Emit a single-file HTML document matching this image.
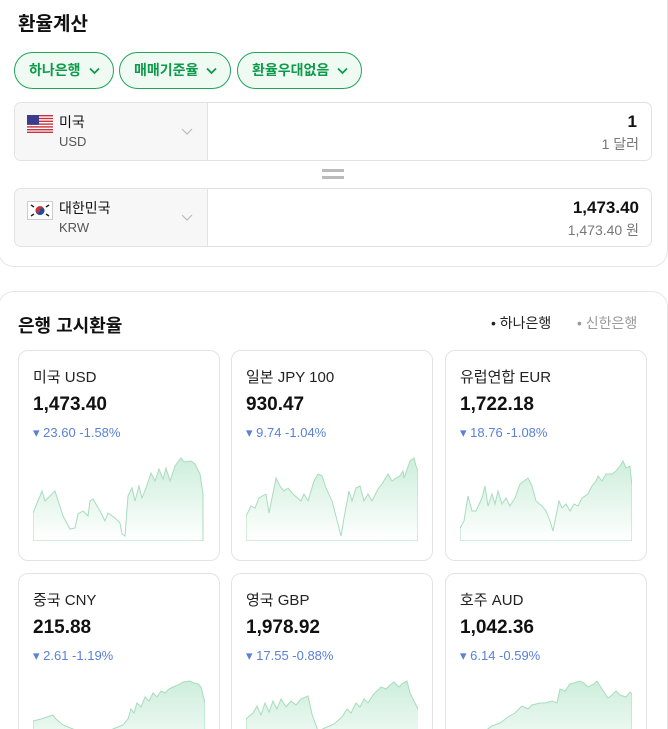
<!DOCTYPE html>
<html><head><meta charset="utf-8"><style>
*{margin:0;padding:0;box-sizing:border-box}
html,body{width:668px;height:729px;overflow:hidden}
body{background:#fff;font-family:"Liberation Sans","Noto Sans CJK KR",sans-serif;color:#111;position:relative}
.a{position:absolute;white-space:nowrap}
.panel{position:absolute;left:-2px;width:670px;border:1px solid #e6e6e6;background:#fff}
.chip{position:absolute;top:52px;height:37px;border:1px solid #1fa55a;border-radius:19px;background:#effaf3;color:#0d9a4a;font-weight:bold;font-size:14px;line-height:35px;padding-left:14px;padding-right:32px;white-space:nowrap}
.chip svg{position:absolute;right:13px;top:14px}
.box{position:absolute;left:14px;width:638px;height:59px;border:1px solid #e2e2e2;border-radius:7px;overflow:hidden}
.box .l{position:absolute;left:0;top:0;width:193px;height:100%;background:#f7f7f7;border-right:1px solid #e2e2e2}
.card{position:absolute;width:202px;height:211px;border:1px solid #e3e3e3;border-radius:10px;background:#fff;overflow:hidden}
.card.b{height:156px;border-bottom:none;border-radius:10px 10px 0 0}
.card .t{position:absolute;left:14px;top:15px;font-size:15px;color:#222}
.card .v{position:absolute;left:14px;top:43px;font-size:19px;font-weight:bold;color:#111}
.card .c{position:absolute;left:14px;top:74px;font-size:13px;color:#5a80d8}
.card svg.ch{position:absolute;left:14px;top:105px}
</style></head><body>
<div class="panel" style="top:-20px;height:287px;border-radius:0 0 16px 16px"></div>
<div class="panel" style="top:291px;height:438px;border-bottom:none;border-radius:16px 16px 0 0"></div>

<div class="a" style="left:18px;top:9px;font-size:19px;font-weight:bold">환율계산</div>
<div class="chip" style="left:14px">하나은행<svg width="11" height="8" viewBox="0 0 11 8"><path d="M1 1.5l4.5 4.5 4.5-4.5" fill="none" stroke="#0d9a4a" stroke-width="1.8"/></svg></div>
<div class="chip" style="left:119px">매매기준율<svg width="11" height="8" viewBox="0 0 11 8"><path d="M1 1.5l4.5 4.5 4.5-4.5" fill="none" stroke="#0d9a4a" stroke-width="1.8"/></svg></div>
<div class="chip" style="left:237px">환율우대없음<svg width="11" height="8" viewBox="0 0 11 8"><path d="M1 1.5l4.5 4.5 4.5-4.5" fill="none" stroke="#0d9a4a" stroke-width="1.8"/></svg></div>

<div class="box" style="top:102px"><div class="l">
<svg class="a" style="left:12px;top:12px" width="26" height="18" viewBox="0 0 26 18"><rect width="26" height="18" fill="#fff"/><g fill="#c8323c"><rect y="0" width="26" height="1.4"/><rect y="2.8" width="26" height="1.4"/><rect y="5.6" width="26" height="1.4"/><rect y="8.4" width="26" height="1.4"/><rect y="11.2" width="26" height="1.4"/><rect y="14" width="26" height="1.4"/><rect y="16.6" width="26" height="1.4"/></g><rect width="12" height="9.8" fill="#3c3b8e"/></svg>
<div class="a" style="left:44px;top:9px;font-size:14px">미국</div>
<div class="a" style="left:44px;top:31px;font-size:13px;color:#555">USD</div>
<svg class="a" style="left:166px;top:25px" width="12" height="8" viewBox="0 0 12 8"><path d="M1 1l5 5 5-5" fill="none" stroke="#bbb" stroke-width="1.2"/></svg>
</div>
<div class="a" style="right:14px;top:9px;font-size:17px;font-weight:bold">1</div>
<div class="a" style="right:12px;top:31px;font-size:14px;color:#777">1 달러</div>
</div>
<div class="a" style="left:322px;top:169px;width:22px;height:3px;background:#bbb"></div>
<div class="a" style="left:322px;top:176px;width:22px;height:3px;background:#bbb"></div>

<div class="box" style="top:188px"><div class="l">
<svg class="a" style="left:12px;top:12px" width="26" height="19" viewBox="0 0 26 19"><rect x=".5" y=".5" width="25" height="18" fill="#fff" stroke="#ccc"/><circle cx="13" cy="9.5" r="4.5" fill="#c8323c"/><path d="M8.5 9.5a4.5 4.5 0 0 0 9 0a2.25 2.25 0 0 0-4.5 0a2.25 2.25 0 0 1-4.5 0z" fill="#1a4fa0"/><g stroke="#222" stroke-width="1.4"><path d="M4 4l3 2M4 15l3-2M22 4l-3 2M22 15l-3-2"/></g></svg>
<div class="a" style="left:44px;top:9px;font-size:14px">대한민국</div>
<div class="a" style="left:44px;top:31px;font-size:13px;color:#555">KRW</div>
<svg class="a" style="left:166px;top:25px" width="12" height="8" viewBox="0 0 12 8"><path d="M1 1l5 5 5-5" fill="none" stroke="#bbb" stroke-width="1.2"/></svg>
</div>
<div class="a" style="right:12px;top:9px;font-size:17px;font-weight:bold">1,473.40</div>
<div class="a" style="right:12px;top:31px;font-size:14px;color:#777">1,473.40 원</div>
</div>

<div class="a" style="left:18px;top:312px;font-size:18px;font-weight:bold">은행 고시환율</div>
<div class="a" style="left:491px;top:313px;font-size:14px;color:#222">• 하나은행</div>
<div class="a" style="left:577px;top:313px;font-size:14px;color:#999">• 신한은행</div>

<svg width="0" height="0" style="position:absolute"><defs><linearGradient id="g" x1="0" y1="0" x2="0" y2="1"><stop offset="0" stop-color="#cdeedb"/><stop offset="1" stop-color="#fff"/></linearGradient></defs></svg>

<div class="card" style="left:18px;top:350px"><div class="t">미국 USD</div><div class="v">1,473.40</div><div class="c">▾ 23.60 -1.58%</div>
<svg class="ch" width="172" height="85" viewBox="0 0 172 85"><path d="M0 57L9 35 12 45 20 37 22 35 30 60 37 73 42 72 45 58 50 55 55 60 57 45 60 43 67 55 72 65 75 57 82 62 87 67 89 78 92 80 95 40 99 32 102 45 106 30 109 42 113 32 118 17 122 25 126 13 130 23 133 12 137 25 142 10 148 2 151 6 158 5 162 8 167 18 170 38V85H0Z" fill="url(#g)" stroke="#a8dcbd" stroke-width="1"/></svg></div>

<div class="card" style="left:231px;top:350px"><div class="t">일본 JPY 100</div><div class="v">930.47</div><div class="c">▾ 9.74 -1.04%</div>
<svg class="ch" width="172" height="85" viewBox="0 0 172 85"><path d="M0 60L5 50 9 52 13 42 20 38 23 57 30 22 34 30 38 35 42 32 47 38 55 45 58 38 62 45 68 25 72 18 76 20 80 32 86 45 92 68 95 80 98 62 103 35 106 45 110 32 114 30 118 45 122 38 126 45 132 33 136 28 142 18 146 25 150 22 154 20 157 15 158 22 164 5 168 2 170 10 172 15V85H0Z" fill="url(#g)" stroke="#a8dcbd" stroke-width="1"/></svg></div>

<div class="card" style="left:445px;top:350px"><div class="t">유럽연합 EUR</div><div class="v">1,722.18</div><div class="c">▾ 18.76 -1.08%</div>
<svg class="ch" width="172" height="85" viewBox="0 0 172 85"><path d="M0 72L4 65 8 40 12 55 16 55 22 42 25 30 28 50 32 38 35 48 38 35 42 48 46 42 50 50 55 42 60 28 64 25 68 22 72 30 76 45 82 50 86 55 90 65 93 75 96 60 99 45 102 52 106 48 110 55 114 48 118 50 122 42 128 38 132 30 136 25 138 20 142 25 146 18 152 18 156 15 160 10 163 5 166 12 170 10 172 30V85H0Z" fill="url(#g)" stroke="#a8dcbd" stroke-width="1"/></svg></div>

<div class="card b" style="left:18px;top:573px"><div class="t">중국 CNY</div><div class="v">215.88</div><div class="c">▾ 2.61 -1.19%</div>
<svg class="ch" width="172" height="85" viewBox="0 0 172 85"><path d="M0 42L8 40 14 38 20 36 23 40 30 46 45 52 60 54 75 52 90 46 95 40 98 30 101 34 104 24 108 28 112 18 116 22 120 14 124 18 128 12 132 14 136 10 140 8 145 6 150 3 157 2 161 4 165 5 168 8 172 24V85H0Z" fill="url(#g)" stroke="#a8dcbd" stroke-width="1"/></svg></div>

<div class="card b" style="left:231px;top:573px"><div class="t">영국 GBP</div><div class="v">1,978.92</div><div class="c">▾ 17.55 -0.88%</div>
<svg class="ch" width="172" height="85" viewBox="0 0 172 85"><path d="M0 40L7 34 11 27 15 36 19 24 23 33 27 22 31 30 35 20 40 28 45 22 50 26 55 20 62 17 66 35 72 52 88 45 96 38 101 30 105 34 110 24 114 28 118 20 122 24 127 16 131 12 135 8 140 10 144 6 148 3 153 8 157 4 161 2 164 14 167 20 170 26 174 34V85H0Z" fill="url(#g)" stroke="#a8dcbd" stroke-width="1"/></svg></div>

<div class="card b" style="left:445px;top:573px"><div class="t">호주 AUD</div><div class="v">1,042.36</div><div class="c">▾ 6.14 -0.59%</div>
<svg class="ch" width="172" height="85" viewBox="0 0 172 85"><path d="M0 58L15 55 25 52 32 47 40 44 48 38 55 34 62 27 68 30 72 26 80 24 85 24 92 22 97 24 100 10 105 12 110 5 114 4 120 2 124 4 128 8 134 5 137 2 142 10 148 19 152 16 156 12 160 16 166 18 170 13 172 15V85H0Z" fill="url(#g)" stroke="#a8dcbd" stroke-width="1"/></svg></div>
</body></html>
